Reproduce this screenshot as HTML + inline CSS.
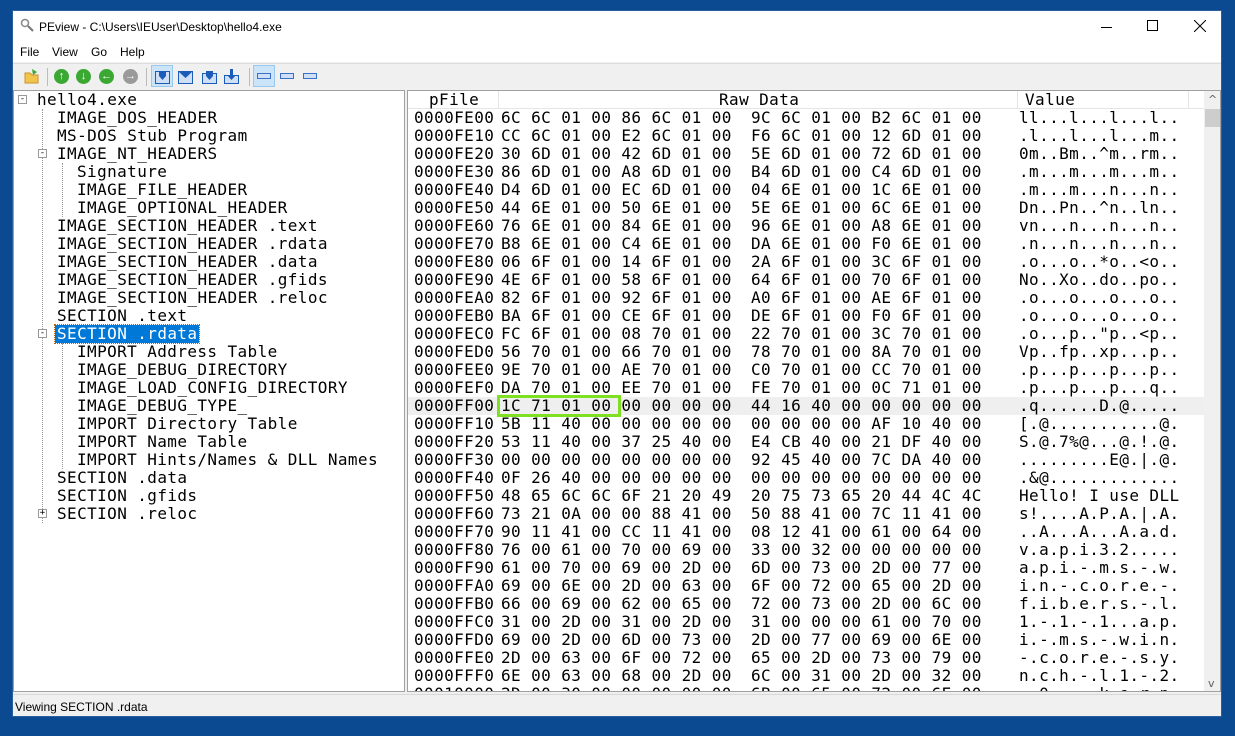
<!DOCTYPE html>
<html><head><meta charset="utf-8"><style>
*{margin:0;padding:0;box-sizing:border-box}
body{width:1235px;height:736px;background:#0b4a90;position:relative;overflow:hidden;font-family:"Liberation Sans",sans-serif}
.win{position:absolute;left:12px;top:10px;width:1210px;height:707px;background:#f0f0f0;border:1px solid #2a5f9e}
.title{position:absolute;left:0;top:0;width:100%;height:31px;background:#fff;font-size:12px;color:#000}
.menu{position:absolute;left:0;top:31px;width:100%;height:20px;background:#fff;font-size:12px}
.menu span{position:absolute;top:3px}
.tb{position:absolute;left:0;top:52px;width:100%;height:27px;background:#f0f0f0;border-top:1px solid #ddd}
.mono{font-family:"DejaVu Sans Mono","Liberation Mono",monospace;font-size:16px;letter-spacing:0.4px;line-height:18px;white-space:pre;color:#000}
.tree{position:absolute;left:13px;top:90px;width:392px;height:602px;background:#fff;border:1px solid #a0a0a0;overflow:hidden}
.hex{position:absolute;left:407px;top:90px;width:814px;height:602px;background:#fff;border:1px solid #a0a0a0;overflow:hidden}
.status{position:absolute;left:0;top:683px;width:100%;height:23px;font-size:12px;border-top:1px solid #d8d8d8}
.circ{position:absolute;top:5px;width:15px;height:15px;border-radius:50%;background:#3aa832;color:#fff;font-size:11px;line-height:15px;text-align:center;font-weight:bold}
.blu{position:absolute;top:5px;width:15px;height:15px}
</style></head><body>
<div class="win">
 <div class="title">
  <svg style="position:absolute;left:7px;top:7px" width="14" height="14"><circle cx="5" cy="5" r="3.5" fill="none" stroke="#888" stroke-width="1.5"/><line x1="8" y1="8" x2="13" y2="13" stroke="#777" stroke-width="2"/></svg>
  <span style="position:absolute;left:26px;top:9px">PEview - C:\Users\IEUser\Desktop\hello4.exe</span>
  <div style="position:absolute;left:1088px;top:16px;width:11px;height:1px;background:#000"></div>
  <div style="position:absolute;left:1134px;top:9px;width:11px;height:11px;border:1px solid #000"></div>
  <svg style="position:absolute;left:1181px;top:9px" width="12" height="12"><path d="M0 0L12 12M12 0L0 12" stroke="#000" stroke-width="1"/></svg>
 </div>
 <div class="menu"><span style="left:7px">File</span><span style="left:39px">View</span><span style="left:78px">Go</span><span style="left:107px">Help</span></div>
 <div class="tb">
  <svg style="position:absolute;left:11px;top:4px" width="16" height="16"><path d="M1 5h5l2 2h6v8H1z" fill="#f2c44c" stroke="#c9952a"/><path d="M8 1l5 3-4 3" fill="#3aa832"/></svg>
  <div style="position:absolute;left:34px;top:4px;width:1px;height:18px;background:#bbb"></div>
  <div class="circ" style="left:41px">↑</div><div class="circ" style="left:63px">↓</div><div class="circ" style="left:86px">←</div><div class="circ" style="left:110px;background:#9a9a9a">→</div>
  <div style="position:absolute;left:133px;top:4px;width:1px;height:18px;background:#bbb"></div>
  <div style="position:absolute;left:138px;top:1px;width:22px;height:22px;background:#cce4f7;border:1px solid #99c9ef"></div>
  <svg class="blu" style="left:142px" viewBox="0 0 15 15"><rect x="0.5" y="2.5" width="14" height="12" fill="#cfe0f6" stroke="#1a5cb8"/><path d="M4 3h7v4l-3.5 4L4 7z" fill="#1a5cb8"/></svg>
  <svg class="blu" style="left:165px" viewBox="0 0 15 15"><rect x="0.5" y="2.5" width="14" height="12" fill="#cfe0f6" stroke="#1a5cb8"/><path d="M1 3h13l-6.5 6z" fill="#1a5cb8"/></svg>
  <svg class="blu" style="left:189px" viewBox="0 0 15 15"><rect x="0.5" y="4.5" width="14" height="10" fill="#cfe0f6" stroke="#1a5cb8"/><path d="M4 2h7v5l-3.5 4L4 7z" fill="#1a5cb8"/></svg>
  <svg class="blu" style="left:211px" viewBox="0 0 15 15"><rect x="0.5" y="6.5" width="14" height="8" fill="#cfe0f6" stroke="#1a5cb8"/><path d="M6 0h3v6h3l-4.5 5L3 6h3z" fill="#1a5cb8"/></svg>
  <div style="position:absolute;left:236px;top:4px;width:1px;height:18px;background:#bbb"></div>
  <div style="position:absolute;left:240px;top:1px;width:22px;height:22px;background:#cce4f7;border:1px solid #99c9ef"></div>
  <div style="position:absolute;left:244px;top:9px;width:14px;height:6px;border:1px solid #3a70c8;background:#cfe0f6"></div>
  <div style="position:absolute;left:267px;top:9px;width:14px;height:6px;border:1px solid #3a70c8;background:#cfe0f6"></div>
  <div style="position:absolute;left:290px;top:9px;width:14px;height:6px;border:1px solid #3a70c8;background:#cfe0f6"></div>
 </div>
 <div class="status"><span style="position:absolute;left:2px;top:5px">Viewing SECTION .rdata</span></div>
</div>

<div class="tree mono">
 <div style="position:absolute;left:28px;top:18px;width:0;height:414px;border-left:1px dotted #999"></div>
 <div style="position:absolute;left:48px;top:72px;width:0;height:54px;border-left:1px dotted #999"></div>
 <div style="position:absolute;left:48px;top:252px;width:0;height:126px;border-left:1px dotted #999"></div>
 <div style="position:absolute;left:4px;top:4px;width:9px;height:9px;border:1px solid #999;background:#fff;font-size:9px;line-height:7px;text-align:center;letter-spacing:0">-</div>
 <div style="position:absolute;left:24px;top:58px;width:9px;height:9px;border:1px solid #999;background:#fff;font-size:9px;line-height:7px;text-align:center;letter-spacing:0">-</div>
 <div style="position:absolute;left:24px;top:238px;width:9px;height:9px;border:1px solid #999;background:#fff;font-size:9px;line-height:7px;text-align:center;letter-spacing:0">-</div>
 <div style="position:absolute;left:24px;top:418px;width:9px;height:9px;border:1px solid #999;background:#fff;font-size:9px;line-height:7px;text-align:center;letter-spacing:0">+</div>
 <div style="position:absolute;left:41px;top:234px;width:144px;height:18px;background:#0078d7;outline:1px dotted #c06000"></div>
 <div style="position:absolute;left:23px;top:0">hello4.exe</div>
 <div style="position:absolute;left:43px;top:18px">IMAGE_DOS_HEADER
MS-DOS Stub Program
IMAGE_NT_HEADERS</div>
 <div style="position:absolute;left:63px;top:72px">Signature
IMAGE_FILE_HEADER
IMAGE_OPTIONAL_HEADER</div>
 <div style="position:absolute;left:43px;top:126px">IMAGE_SECTION_HEADER .text
IMAGE_SECTION_HEADER .rdata
IMAGE_SECTION_HEADER .data
IMAGE_SECTION_HEADER .gfids
IMAGE_SECTION_HEADER .reloc
SECTION .text
<span style="color:#fff">SECTION .rdata</span></div>
 <div style="position:absolute;left:63px;top:252px">IMPORT Address Table
IMAGE_DEBUG_DIRECTORY
IMAGE_LOAD_CONFIG_DIRECTORY
IMAGE_DEBUG_TYPE_
IMPORT Directory Table
IMPORT Name Table
IMPORT Hints/Names &amp; DLL Names</div>
 <div style="position:absolute;left:43px;top:378px">SECTION .data
SECTION .gfids
SECTION .reloc</div>
</div>

<div class="hex mono">
 <div style="position:absolute;left:0;top:0;width:796px;height:18px;background:#fff;border-bottom:1px solid #e5e5e5"></div>
 <div style="position:absolute;left:90px;top:0;width:1px;height:18px;background:#e5e5e5"></div>
 <div style="position:absolute;left:609px;top:0;width:1px;height:18px;background:#e5e5e5"></div>
 <div style="position:absolute;left:780px;top:0;width:1px;height:18px;background:#e5e5e5"></div>
 <div style="position:absolute;left:21px;top:0">pFile</div>
 <div style="position:absolute;left:311px;top:0">Raw Data</div>
 <div style="position:absolute;left:617px;top:0">Value</div>
 <div style="position:absolute;left:0;top:306px;width:796px;height:18px;background:#efefef"></div>
 <div style="position:absolute;left:89px;top:304px;width:124px;height:22px;border:3px solid #7ee020"></div>
 <div style="position:absolute;left:6px;top:18px">0000FE00
0000FE10
0000FE20
0000FE30
0000FE40
0000FE50
0000FE60
0000FE70
0000FE80
0000FE90
0000FEA0
0000FEB0
0000FEC0
0000FED0
0000FEE0
0000FEF0
0000FF00
0000FF10
0000FF20
0000FF30
0000FF40
0000FF50
0000FF60
0000FF70
0000FF80
0000FF90
0000FFA0
0000FFB0
0000FFC0
0000FFD0
0000FFE0
0000FFF0
00010000</div>
 <div style="position:absolute;left:93px;top:18px">6C 6C 01 00 86 6C 01 00
CC 6C 01 00 E2 6C 01 00
30 6D 01 00 42 6D 01 00
86 6D 01 00 A8 6D 01 00
D4 6D 01 00 EC 6D 01 00
44 6E 01 00 50 6E 01 00
76 6E 01 00 84 6E 01 00
B8 6E 01 00 C4 6E 01 00
06 6F 01 00 14 6F 01 00
4E 6F 01 00 58 6F 01 00
82 6F 01 00 92 6F 01 00
BA 6F 01 00 CE 6F 01 00
FC 6F 01 00 08 70 01 00
56 70 01 00 66 70 01 00
9E 70 01 00 AE 70 01 00
DA 70 01 00 EE 70 01 00
1C 71 01 00 00 00 00 00
5B 11 40 00 00 00 00 00
53 11 40 00 37 25 40 00
00 00 00 00 00 00 00 00
0F 26 40 00 00 00 00 00
48 65 6C 6C 6F 21 20 49
73 21 0A 00 00 88 41 00
90 11 41 00 CC 11 41 00
76 00 61 00 70 00 69 00
61 00 70 00 69 00 2D 00
69 00 6E 00 2D 00 63 00
66 00 69 00 62 00 65 00
31 00 2D 00 31 00 2D 00
69 00 2D 00 6D 00 73 00
2D 00 63 00 6F 00 72 00
6E 00 63 00 68 00 2D 00
2D 00 30 00 00 00 00 00</div>
 <div style="position:absolute;left:343px;top:18px">9C 6C 01 00 B2 6C 01 00
F6 6C 01 00 12 6D 01 00
5E 6D 01 00 72 6D 01 00
B4 6D 01 00 C4 6D 01 00
04 6E 01 00 1C 6E 01 00
5E 6E 01 00 6C 6E 01 00
96 6E 01 00 A8 6E 01 00
DA 6E 01 00 F0 6E 01 00
2A 6F 01 00 3C 6F 01 00
64 6F 01 00 70 6F 01 00
A0 6F 01 00 AE 6F 01 00
DE 6F 01 00 F0 6F 01 00
22 70 01 00 3C 70 01 00
78 70 01 00 8A 70 01 00
C0 70 01 00 CC 70 01 00
FE 70 01 00 0C 71 01 00
44 16 40 00 00 00 00 00
00 00 00 00 AF 10 40 00
E4 CB 40 00 21 DF 40 00
92 45 40 00 7C DA 40 00
00 00 00 00 00 00 00 00
20 75 73 65 20 44 4C 4C
50 88 41 00 7C 11 41 00
08 12 41 00 61 00 64 00
33 00 32 00 00 00 00 00
6D 00 73 00 2D 00 77 00
6F 00 72 00 65 00 2D 00
72 00 73 00 2D 00 6C 00
31 00 00 00 61 00 70 00
2D 00 77 00 69 00 6E 00
65 00 2D 00 73 00 79 00
6C 00 31 00 2D 00 32 00
6B 00 65 00 72 00 6E 00</div>
 <div style="position:absolute;left:611px;top:18px">ll...l...l...l..
.l...l...l...m..
0m..Bm..^m..rm..
.m...m...m...m..
.m...m...n...n..
Dn..Pn..^n..ln..
vn...n...n...n..
.n...n...n...n..
.o...o..*o..&lt;o..
No..Xo..do..po..
.o...o...o...o..
.o...o...o...o..
.o...p.."p..&lt;p..
Vp..fp..xp...p..
.p...p...p...p..
.p...p...p...q..
.q......D.@.....
[.@...........@.
S.@.7%@...@.!.@.
.........E@.|.@.
.&amp;@.............
Hello! I use DLL
s!....A.P.A.|.A.
..A...A...A.a.d.
v.a.p.i.3.2.....
a.p.i.-.m.s.-.w.
i.n.-.c.o.r.e.-.
f.i.b.e.r.s.-.l.
1.-.1.-.1...a.p.
i.-.m.s.-.w.i.n.
-.c.o.r.e.-.s.y.
n.c.h.-.l.1.-.2.
-.0.....k.e.r.n.</div>
 <div style="position:absolute;left:796px;top:0;width:17px;height:600px;background:#f0f0f0"></div>
 <div style="position:absolute;left:797px;top:18px;width:15px;height:18px;background:#cdcdcd"></div>
 <div style="position:absolute;left:800px;top:0;font-size:11px;color:#606060;font-family:'DejaVu Sans',sans-serif;letter-spacing:0">^</div>
 <div style="position:absolute;left:800px;top:584px;font-size:11px;color:#606060;font-family:'DejaVu Sans',sans-serif;letter-spacing:0">v</div>
</div>
</body></html>
